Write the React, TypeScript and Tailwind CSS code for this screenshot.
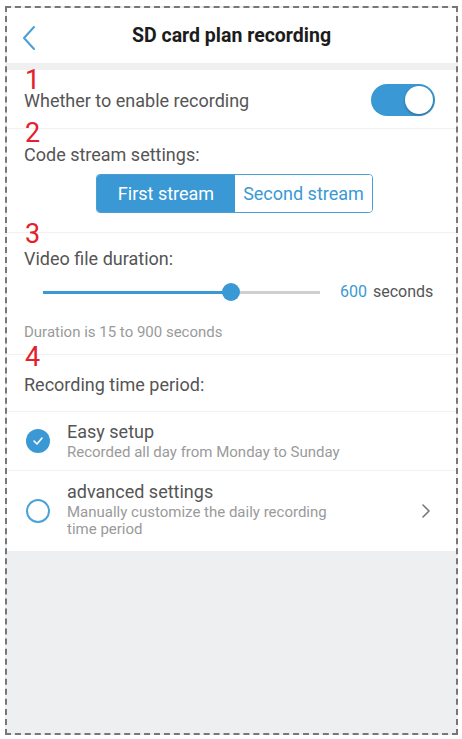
import React from "react";

const Num = ({ n, top }: { n: string; top: string }) => (
  <span
    className={`absolute left-[18px] ${top} text-[27px] leading-none text-[#e4202c]`}
    style={{ fontFamily: "Roboto, sans-serif" }}
  >
    {n}
  </span>
);

export default function App() {
  return (
    <div
      className="w-[462px] h-[739px] bg-white pt-[6px] pl-[5px]"
      style={{ fontFamily: "Roboto, 'Noto Sans', sans-serif" }}
    >
      <div className="w-[453px] h-[729px] border-2 border-dashed border-[#777] bg-[#eeeff0] flex flex-col overflow-hidden">
        {/* Header */}
        <div className="relative h-[55px] bg-white flex items-center justify-center shrink-0">
          <svg
            className="absolute left-[14px] top-[17px]"
            width="16"
            height="26"
            viewBox="0 0 16 26"
            fill="none"
          >
            <path d="M13 2 L3 13 L13 24" stroke="#4a9fd4" strokeWidth="2" strokeLinecap="round" strokeLinejoin="round" />
          </svg>
          <span className="text-[19.5px] font-bold text-[#1c1c1c] mt-[1px]">SD card plan recording</span>
        </div>
        <div className="h-[7px] bg-[#f0f0f0] shrink-0" />

        {/* Section 1 */}
        <div className="relative h-[58px] bg-white flex items-center justify-between pl-[17px] pr-[21px] shrink-0">
          <Num n="1" top="top-[-3px]" />
          <span className="text-[18px] text-[#555] mt-[3px]">Whether to enable recording</span>
          <div className="w-[64px] h-[32px] rounded-full bg-[#3a99d4] flex items-center justify-end pr-[2px] mt-[1px]">
            <div className="w-[28px] h-[28px] rounded-full bg-white shadow-[0_1px_3px_rgba(0,0,0,0.35)]" />
          </div>
        </div>
        <div className="h-px bg-[#f1f1f1] shrink-0" />

        {/* Section 2 */}
        <div className="relative bg-white pt-[15px] pb-[19px] shrink-0">
          <Num n="2" top="top-[-9px]" />
          <div className="pl-[17px] text-[18px] leading-[21px] text-[#555]">Code stream settings:</div>
          <div className="mt-[9px] ml-[89px] flex h-[39px] w-[277px] rounded-[4px] border border-[#4a9fd4] overflow-hidden">
            <div className="w-[138px] bg-[#3a99d4] flex items-center justify-center text-white text-[18px]">
              First stream
            </div>
            <div className="flex-1 bg-white flex items-center justify-center text-[#3a99d4] text-[18px]">
              Second stream
            </div>
          </div>
        </div>
        <div className="h-px bg-[#f1f1f1] shrink-0" />

        {/* Section 3 */}
        <div className="relative bg-white pt-[15px] h-[121px] shrink-0">
          <Num n="3" top="top-[-12px]" />
          <div className="pl-[17px] text-[18px] leading-[21px] text-[#555]">Video file duration:</div>
          <div className="mt-[13px] flex items-center h-[20px]">
            <div className="ml-[36px] w-[277px] relative h-[20px] flex items-center">
              <div className="h-[3px] w-[188px] bg-[#3a99d4]" />
              <div className="h-[3px] flex-1 bg-[#cfcfcf]" />
              <div className="absolute left-[179px] top-[1px] w-[18px] h-[18px] rounded-full bg-[#3a99d4]" />
            </div>
            <span className="ml-[20px] text-[16px] text-[#3a99d4]">600</span>
            <span className="ml-[6px] text-[16px] text-[#555]">seconds</span>
          </div>
          <div className="mt-[21px] pl-[17px] text-[15px] leading-[18px] text-[#9a9a9a]">
            Duration is 15 to 900 seconds
          </div>
        </div>
        <div className="h-px bg-[#f1f1f1] shrink-0" />

        {/* Section 4 */}
        <div className="relative h-[56px] bg-white flex items-center pl-[17px] shrink-0">
          <Num n="4" top="top-[-11px]" />
          <span className="text-[18px] text-[#555] mt-[2px]">Recording time period:</span>
        </div>
        <div className="h-px bg-[#f1f1f1] shrink-0" />

        {/* Easy setup */}
        <div className="h-[58px] bg-white flex items-center pl-[19px] shrink-0">
          <div className="w-[24px] h-[24px] rounded-full bg-[#3a99d4] flex items-center justify-center">
            <svg width="12" height="10" viewBox="0 0 12 10" fill="none">
              <path d="M2 5 L5 8 L10 2" stroke="white" strokeWidth="1.6" strokeLinecap="round" strokeLinejoin="round" />
            </svg>
          </div>
          <div className="ml-[17px] flex flex-col">
            <span className="text-[18px] leading-[21px] text-[#555]">Easy setup</span>
            <span className="mt-[1px] text-[15px] leading-[18px] text-[#9a9a9a]">Recorded all day from Monday to Sunday</span>
          </div>
        </div>
        <div className="h-px bg-[#f1f1f1] shrink-0" />

        {/* Advanced */}
        <div className="h-[80px] bg-white flex items-center pl-[19px] pr-[25px] shrink-0">
          <div className="w-[24px] h-[24px] rounded-full border-2 border-[#4aa3d8] shrink-0" />
          <div className="ml-[17px] flex flex-col flex-1 mt-[-3px]">
            <span className="text-[18px] leading-[21px] text-[#555]">advanced settings</span>
            <span className="mt-[2px] text-[15px] leading-[17px] text-[#9a9a9a] w-[275px]">
              Manually customize the daily recording time period
            </span>
          </div>
          <svg width="10" height="16" viewBox="0 0 10 16" fill="none">
            <path d="M2 2 L8 8 L2 14" stroke="#777" strokeWidth="1.6" strokeLinecap="round" strokeLinejoin="round" />
          </svg>
        </div>

        <div className="flex-1 bg-[#eeeff0]" />
      </div>
    </div>
  );
}
